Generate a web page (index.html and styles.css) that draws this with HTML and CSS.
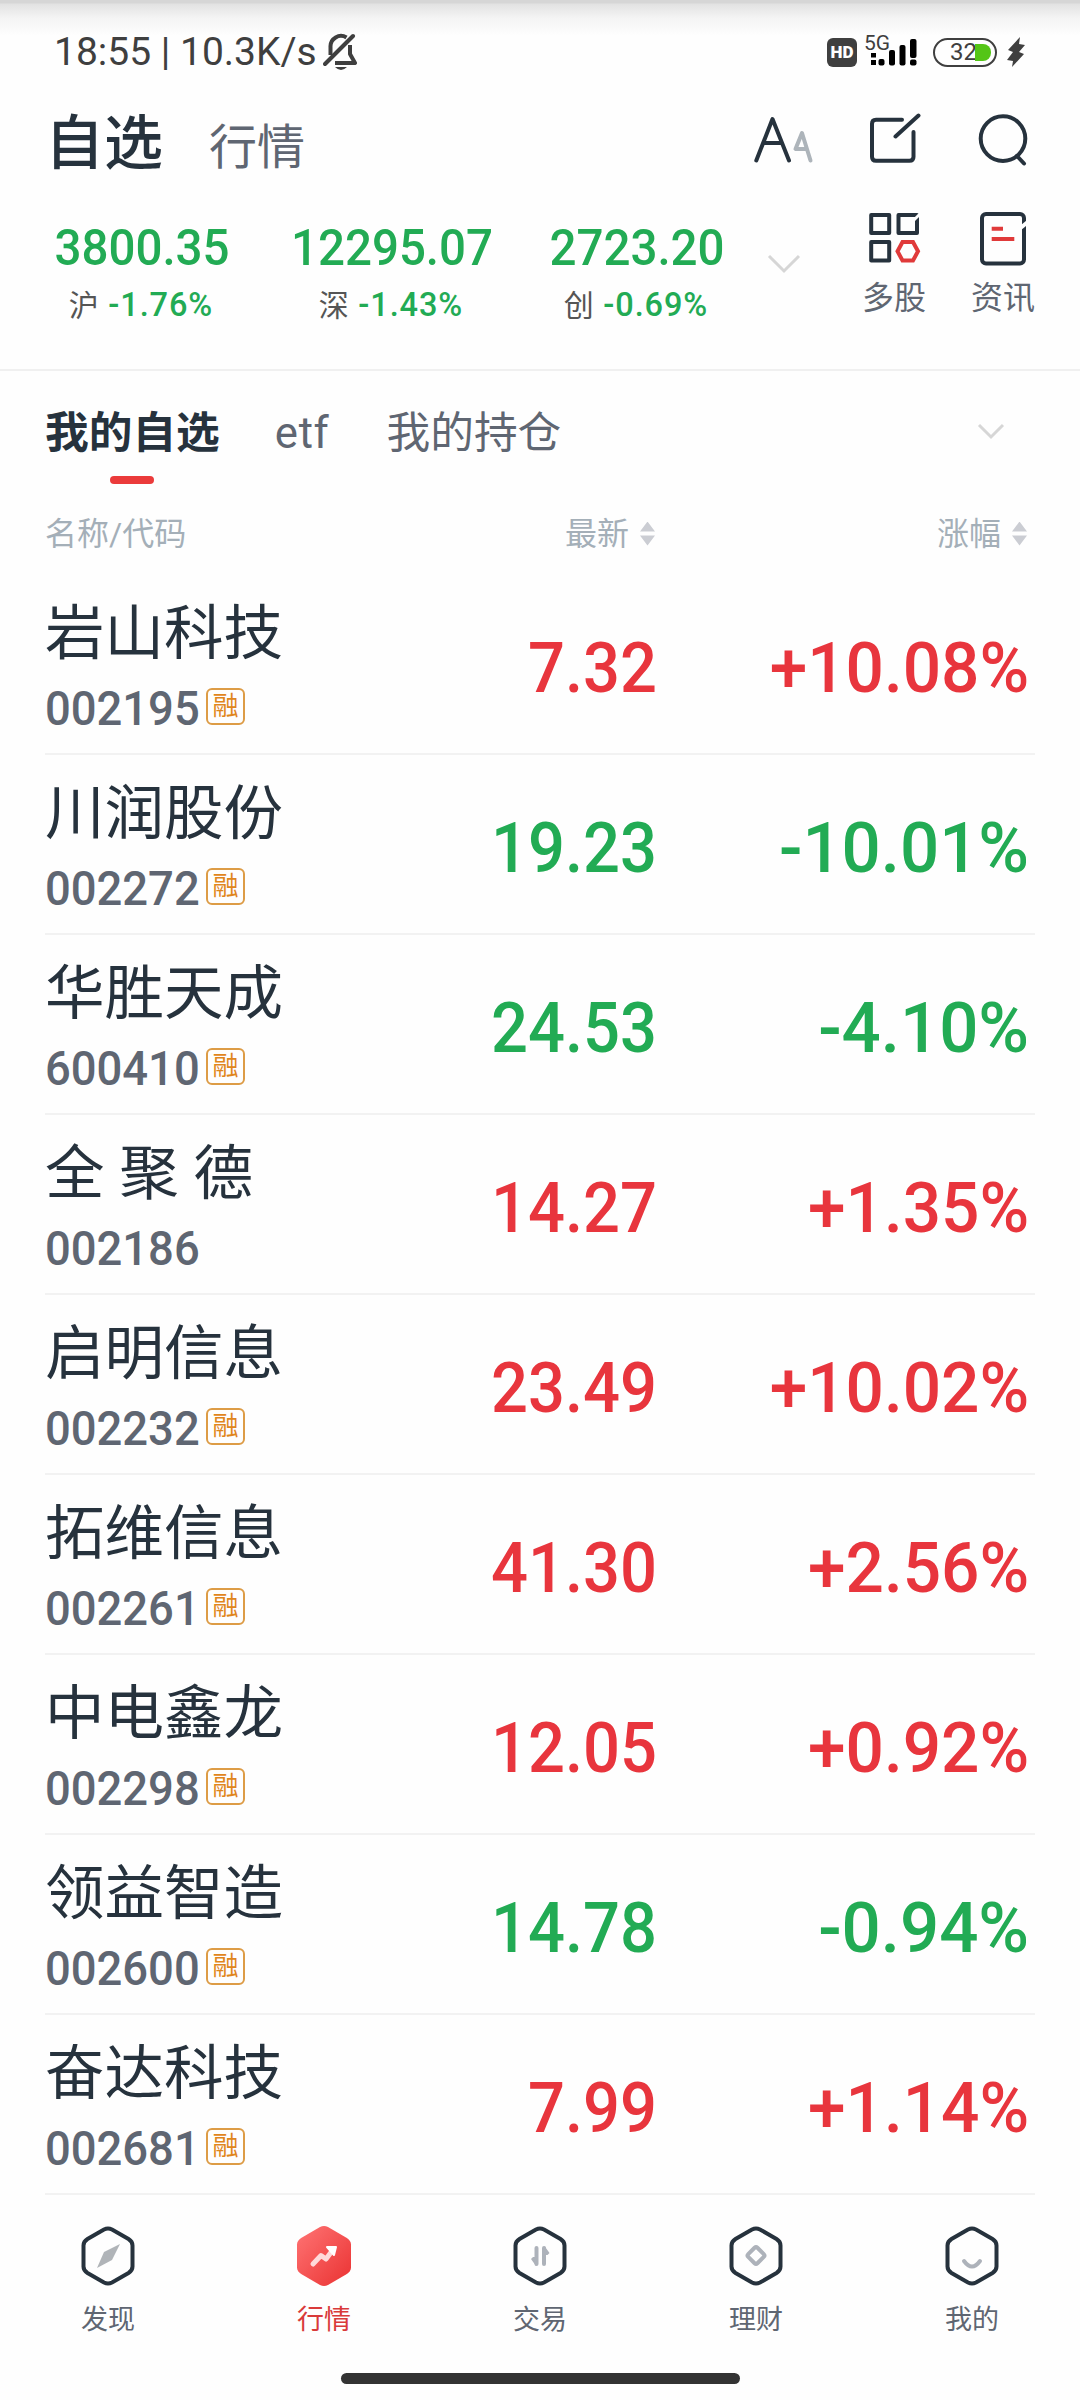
FILE: index.html
```html
<!DOCTYPE html>
<html lang="zh-CN">
<head>
	<meta charset="UTF-8">
	<title>自选</title>
	<link rel="stylesheet" href="styles.css">
</head>
<body>
	<header class="status">
		<span class="clock">18:55 | 10.3K/s</span>
		<svg class="bell" width="36" height="40" viewBox="0 0 36 40">
			<path d="M7.500 23V15a10.500 10.500 0 0 1 16-9.500M27 13v9l5 9H12" fill="none" stroke="#3f3f3f" stroke-width="4" stroke-linejoin="round"/>
			<path d="M2 32L30 4" stroke="#3f3f3f" stroke-width="4" stroke-linecap="round"/>
			<path d="M12 35h12q-6 6-12 0z" fill="#3f3f3f"/>
		</svg>
		<div class="phone">
			<span class="hd">HD</span>
			<span class="net">5G</span>
			<svg class="signal" width="48" height="30" viewBox="0 0 48 30">
				<path d="M1 16h5v4.500H1zM1 23h5v5H1z"/>
				<rect x="8.500" y="22" width="6" height="6.500" rx="2"/>
				<rect x="19" y="13" width="6" height="15.500" rx="2"/>
				<rect x="29.500" y="8" width="6" height="20.500" rx="2"/>
				<rect x="40" y="2" width="6.500" height="19" rx="2"/>
				<rect x="40" y="22.500" width="6.500" height="6" rx="2"/>
			</svg>
			<span class="battery"><b>32</b><i></i></span>
			<svg width="18" height="30" viewBox="0 0 18 30">
				<path d="M13 0L1 13l5 2-6 8 6 1-1 6L17 17l-5-2 6-7-6-1z" fill="#3f3f3f"/>
			</svg>
		</div>
	</header>

	<section class="top">
		<nav class="pages">
			<h1>自选</h1>
			<h2>行情</h2>
		</nav>
		<div class="tools">
			<svg width="62" height="54" viewBox="0 0 62 54">
				<path d="M43 36h11M42.500 36L49 20l8.500 27.500" class="line pale"/>
				<path d="M3.300 47.500L19.500 6 36 47.500M10 30h19" class="line"/>
			</svg>
			<svg width="54" height="54" viewBox="0 0 54 54">
				<path d="M35 6.700H9q-4 0-4 4v33q0 4 4 4h33.500q4 0 4-4V19M28.500 23.500l23-21" class="line"/>
			</svg>
			<svg width="54" height="54" viewBox="0 0 54 54">
				<circle cx="27" cy="25.600" r="22.300" class="line"/>
				<path d="M41 43l7 7.500" class="line"/>
			</svg>
		</div>
	</section>

	<section class="market">
		<ul class="indexes">
			<li><strong>3800.35</strong><p>沪 <i>-1.76%</i></p></li>
			<li><strong>12295.07</strong><p>深 <i>-1.43%</i></p></li>
			<li><strong>2723.20</strong><p>创 <i>-0.69%</i></p></li>
		</ul>
		<svg class="more" width="34" height="20" viewBox="0 0 34 20">
			<path d="M2 2l15 15L32 2"/>
		</svg>
		<div class="shortcut">
			<svg width="54" height="58" viewBox="0 0 54 58">
				<path d="M4.200 4.900h18v18h-18zM4.200 32h18v18.400h-18zM31.500 4.900H50v18H31.500z" class="box"/>
				<path d="M44 13l9-9" stroke="#fefefe" stroke-width="3"/>
				<path d="M35.500 32h10.500l5 9.300-5 9.200H35.500l-5-9.200z" class="red"/>
			</svg>
			<span>多股</span>
		</div>
		<div class="shortcut">
			<svg width="54" height="58" viewBox="0 0 54 58">
				<rect x="6" y="4" width="42" height="49.500" rx="4" class="box"/>
				<path d="M42 20l11-9" stroke="#fefefe" stroke-width="4"/>
				<path d="M15.700 18.700H27M15.700 29h22.600" class="red"/>
			</svg>
			<span>资讯</span>
		</div>
	</section>

	<nav class="tabs">
		<a class="active">我的自选</a>
		<a class="etf">etf</a>
		<a>我的持仓</a>
		<svg class="more" width="28" height="18" viewBox="0 0 28 18">
			<path d="M2 2l12 12L26 2"/>
		</svg>
	</nav>

	<main>
		<div class="head">
			<span>名称/代码</span>
			<span class="sort">最新</span>
			<span class="sort">涨幅</span>
		</div>
		<div id="stocks"></div>
	</main>

	<footer>
		<a>
			<svg width="56" height="62" viewBox="0 0 56 62">
				<path d="M24 4.500q4-2 8 0L48.500 14q4 2.500 4 6.500v21q0 4-4 6.500L32 57.500q-4 2-8 0L7.500 48q-4-2.500-4-6.500v-21q0-4 4-6.500z" class="shell"/>
				<path d="M40 19L32 35 17 43 24 27z" fill="#b0b4b8"/>
			</svg>
			<span>发现</span>
		</a>
		<a class="active">
			<svg width="56" height="62" viewBox="0 0 56 62">
				<defs>
					<linearGradient id="hot" x1="0" y1="0" x2="1" y2="1">
						<stop offset="0" stop-color="#ff7474"/>
						<stop offset="1" stop-color="#ea3232"/>
					</linearGradient>
				</defs>
				<path d="M24 2q4-2 8 0L50 12.500q5 3 5 7v23q0 4-5 7L32 60q-4 2-8 0L6 49.500q-5-3-5-7v-23q0-4 5-7z" fill="url(#hot)"/>
				<path d="M17 39l8-8.500 5 3.500 6-8" class="rise"/>
				<path d="M31 22h9l-2 8z" class="tip"/>
			</svg>
			<span>行情</span>
		</a>
		<a>
			<svg width="56" height="62" viewBox="0 0 56 62">
				<path d="M24 4.500q4-2 8 0L48.500 14q4 2.500 4 6.500v21q0 4-4 6.500L32 57.500q-4 2-8 0L7.500 48q-4-2.500-4-6.500v-21q0-4 4-6.500z" class="shell"/>
				<path d="M24.500 23v16M32 39V23" class="mark"/>
				<path d="M24 41v-9h-3l-2 2zM32.500 21v9h3l2-2z" fill="#adb2ba"/>
			</svg>
			<span>交易</span>
		</a>
		<a>
			<svg width="56" height="62" viewBox="0 0 56 62">
				<path d="M24 4.500q4-2 8 0L48.500 14q4 2.500 4 6.500v21q0 4-4 6.500L32 57.500q-4 2-8 0L7.500 48q-4-2.500-4-6.500v-21q0-4 4-6.500z" class="shell"/>
				<rect x="21.500" y="24" width="13" height="13" rx="2" transform="rotate(45 28 30.500)" class="mark"/>
			</svg>
			<span>理财</span>
		</a>
		<a>
			<svg width="56" height="62" viewBox="0 0 56 62">
				<path d="M24 4.500q4-2 8 0L48.500 14q4 2.500 4 6.500v21q0 4-4 6.500L32 57.500q-4 2-8 0L7.500 48q-4-2.500-4-6.500v-21q0-4 4-6.500z" class="shell"/>
				<path d="M20 36q8 11 16 0" class="mark"/>
			</svg>
			<span>我的</span>
		</a>
	</footer>
	<div class="homebar"></div>

	<script>
		// name, code, margin badge, price, change
		var stocks = [
			['岩山科技', '002195', true, '7.32', '+10.08%'],
			['川润股份', '002272', true, '19.23', '-10.01%'],
			['华胜天成', '600410', true, '24.53', '-4.10%'],
			['全 聚 德', '002186', false, '14.27', '+1.35%'],
			['启明信息', '002232', true, '23.49', '+10.02%'],
			['拓维信息', '002261', true, '41.30', '+2.56%'],
			['中电鑫龙', '002298', true, '12.05', '+0.92%'],
			['领益智造', '002600', true, '14.78', '-0.94%'],
			['奋达科技', '002681', true, '7.99', '+1.14%']
		];
		var html = '';
		for (var i = 0; i < stocks.length; i++) {
			var s = stocks[i];
			var dir = s[4].charAt(0) == '-' ? 'down' : 'up';
			html += '<div class="row ' + dir + '">';
			html += '<div class="stock"><h3>' + s[0] + '</h3><p><span class="code">' + s[1] + '</span>';
			if (s[2]) {
				html += '<em>融</em>';
			}
			html += '</p></div>';
			html += '<div class="num">' + s[3] + '</div>';
			html += '<div class="num pct">' + s[4] + '</div></div>';
		}
		document.getElementById('stocks').innerHTML = html;
	</script>
</body>
</html>
```
FILE: styles.css
```css
* {
	box-sizing: border-box;
	margin: 0;
	padding: 0;
}
body {
	background: #fefefe linear-gradient(#d6d6d6 0, #d6d6d6 3px, #e2e2e2 4px, #f4f4f4 18px, #fefefe 36px) no-repeat;
	background-size: 100% 36px;
	color: #26323d;
	font-family: Roboto, "Noto Sans CJK SC", sans-serif;
	height: 2400px;
	overflow: hidden;
	width: 1080px;
}
svg {
	display: block;
	flex: none;
}

/* status bar */
.status {
	align-items: center;
	color: #3f3f3f;
	display: flex;
	height: 104px;
	padding: 0 55px 0 54px;
}
.clock {
	font-size: 39px;
	white-space: pre;
	width: 263px;
}
.bell {
	margin-left: 6px;
}
.phone {
	align-items: center;
	display: flex;
	margin-left: auto;
}
.hd {
	background: #3f3f3f;
	border-radius: 6px;
	color: #fff;
	font-size: 17px;
	font-weight: 900;
	height: 29px;
	line-height: 29px;
	text-align: center;
	width: 30px;
}
.net {
	font-size: 21px;
	line-height: 24px;
	margin: -18px -21px 0 7px;
	width: 27px;
}
.signal {
	margin-right: 15px;
}
.battery {
	align-items: center;
	border: 2px solid #3f3f3f;
	border-radius: 15px;
	display: flex;
	height: 29px;
	margin-right: 10px;
	padding-left: 15px;
	width: 64px;
}
.battery b {
	font-size: 24px;
	font-weight: 400;
	line-height: 26px;
	width: 25px;
}
.battery i {
	background: #54c516;
	border-radius: 0 8px 8px 0;
	height: 17px;
	width: 16px;
}

/* page titles and tools */
.top {
	display: flex;
	height: 92px;
	justify-content: space-between;
	padding: 0 50px 0 45px;
}
.pages {
	align-items: baseline;
	display: flex;
	gap: 46px;
}
.pages h1 {
	font-size: 59px;
	font-weight: 500;
	line-height: 79px;
}
.pages h2 {
	color: #5f6672;
	font-size: 48px;
	font-weight: 400;
}
.tools {
	display: flex;
	padding-top: 9px;
}
.tools svg {
	margin-left: 52px;
}
.tools svg:last-child {
	margin-left: 55px;
}
.line {
	fill: none;
	stroke: #26323d;
	stroke-linecap: round;
	stroke-linejoin: round;
	stroke-width: 4;
}
.pale {
	stroke: #adb4ba;
}

/* market indexes */
.market {
	border-bottom: 2px solid #f0f0f0;
	display: flex;
	height: 175px;
	padding-left: 17px;
}
.indexes {
	display: flex;
	list-style: none;
}
.indexes li {
	color: #22ab54;
	padding-top: 19px;
	text-align: center;
	width: 250px;
}
.indexes li:last-child {
	width: 240px;
}
.indexes strong {
	display: block;
	font-size: 50.500px;
	font-weight: 500;
	line-height: 66px;
	transform: scaleX(0.94);
}
.indexes p {
	color: #555;
	font-size: 30px;
	padding-right: 2px;
}
.indexes i {
	color: #22ab54;
	font-size: 32.500px;
	font-style: normal;
	font-weight: 500;
	letter-spacing: 0.9px;
	margin-left: 2px;
}
.more {
	fill: none;
	stroke: #d6d6d6;
	stroke-width: 3;
}
.market .more {
	margin: 58px 61px 0 10px;
}
.shortcut {
	margin-right: 45px;
	padding-top: 14px;
	width: 64px;
}
.shortcut svg {
	margin: 0 auto;
}
.shortcut span {
	color: #5f6672;
	display: block;
	font-size: 32px;
	line-height: 40px;
	margin-top: 10px;
	white-space: nowrap;
}
.box {
	fill: none;
	stroke: #26323d;
	stroke-linejoin: round;
	stroke-width: 4;
}
.red {
	fill: none;
	stroke: #e03a3a;
	stroke-width: 4;
}

/* tabs */
.tabs {
	display: flex;
	height: 126px;
	padding: 30px 45px 0;
}
.tabs a {
	color: #5f6672;
	font-size: 43.700px;
	line-height: 64px;
	margin-right: 55px;
}
.tabs .etf {
	letter-spacing: 0.7px;
	margin-right: 57px;
}
.tabs .active {
	color: #26323d;
	font-weight: 700;
}
.tabs .active:after {
	background: #eb3b3b;
	border-radius: 4px;
	content: "";
	display: block;
	height: 8px;
	margin: 11px auto 0;
	width: 44px;
}
.tabs .more {
	margin: 22px 30px 0 auto;
}

/* list */
.head, .row {
	align-items: center;
	display: grid;
	grid-template-columns: 320px 290px 1fr;
	margin: 0 45px;
}
.head {
	color: #a4afb8;
	font-size: 32px;
	height: 78px;
	line-height: 40px;
	padding: 0 8px 5px 0;
}
.sort {
	align-items: center;
	display: flex;
	justify-content: flex-end;
}
.sort:after {
	background: #cbcdd3;
	clip-path: polygon(50% 0, 100% 42%, 0 42%, 50% 0, 0 58%, 100% 58%, 50% 100%, 0 58%);
	content: "";
	height: 24px;
	margin-left: 11px;
	width: 15px;
}
.row {
	border-bottom: 2px solid #f2f2f2;
	height: 180px;
}
.stock {
	padding-top: 3px;
}
.row h3 {
	font-size: 59.500px;
	font-weight: 400;
	line-height: 80px;
	white-space: nowrap;
}
.row p {
	align-items: center;
	display: flex;
	margin-top: 6px;
}
.code {
	color: #5f6672;
	font-size: 48px;
	font-weight: 500;
	transform: scaleX(0.945);
	transform-origin: left;
	width: 161px;
}
.row em {
	border: 2px solid #dd9c46;
	border-radius: 6px;
	color: #e0861c;
	font-size: 26px;
	font-style: normal;
	height: 37px;
	line-height: 32px;
	margin-bottom: 4px;
	text-align: center;
	width: 39px;
}
.num {
	font-size: 70px;
	font-weight: 500;
	margin-right: -2px;
	padding-top: 7px;
	text-align: right;
	transform: scaleX(0.93);
	transform-origin: right;
}
.pct {
	margin-right: 0;
	padding-right: 6px;
	transform: scaleX(0.965);
}
.up .num { color: #e8353d; }
.down .num { color: #22ab54; }
.down .pct { transform: scaleX(0.985); }

/* bottom bar */
footer {
	display: flex;
	height: 178px;
	padding-top: 30px;
}
footer a {
	align-items: center;
	color: #5f6672;
	display: flex;
	flex: 1;
	flex-direction: column;
	font-size: 27px;
}
footer span {
	line-height: 40px;
	margin-top: 13px;
}
footer .active {
	color: #d93a3a;
}
.shell {
	fill: none;
	stroke: #26323d;
	stroke-width: 4;
}
.mark {
	fill: none;
	stroke: #adb2ba;
	stroke-linecap: round;
	stroke-width: 4;
}
.rise {
	fill: none;
	stroke: #ffdada;
	stroke-linecap: round;
	stroke-linejoin: round;
	stroke-width: 5;
}
.tip {
	fill: #fff;
	stroke: #fff;
	stroke-linejoin: round;
	stroke-width: 2;
}
.homebar {
	background: #333;
	border-radius: 6px;
	height: 11px;
	margin: 0 auto;
	width: 399px;
}
```
